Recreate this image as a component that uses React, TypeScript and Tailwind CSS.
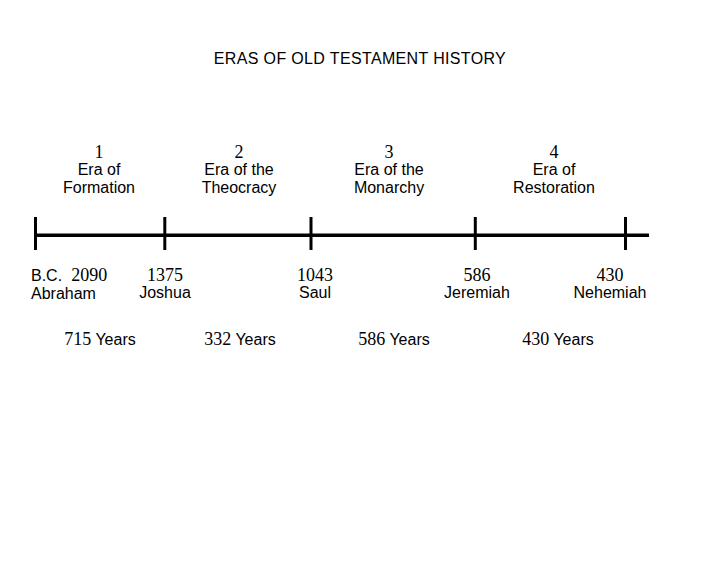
import React from "react";

const sans = "font-['Liberation_Sans',Arial,sans-serif]";
const serif = "font-['Liberation_Serif','Times_New_Roman',serif]";

function Era({ n, a, b, cls }: { n: string; a: string; b: string; cls: string }) {
  return (
    <div className={`w-[140px] text-center ${cls}`}>
      <div className={`${serif} text-[18px] leading-[17px]`}>{n}</div>
      <div className={`${sans} text-[16px] leading-[18px]`}>{a}</div>
      <div className={`${sans} text-[16px] leading-[18px]`}>{b}</div>
    </div>
  );
}

function DateCell({ y, name, cls }: { y: string; name: string; cls: string }) {
  return (
    <div className={`w-[100px] text-center ${cls}`}>
      <div className={`${serif} text-[18px] leading-[18px]`}>{y}</div>
      <div className={`${sans} text-[16px] leading-[18px]`}>{name}</div>
    </div>
  );
}

function Years({ n, cls }: { n: string; cls: string }) {
  return (
    <div className={`w-[100px] text-center whitespace-nowrap leading-[18px] ${cls}`}>
      <span className={`${serif} text-[18px]`}>{n}</span>
      <span className={`${sans} text-[16px]`}> Years</span>
    </div>
  );
}

export default function App() {
  const ticks = [35.5, 164.8, 311, 475.3, 625.5];
  return (
    <div className="w-[720px] h-[576px] bg-white text-black flex flex-col">
      <div className={`pt-[50px] text-center ${sans} text-[16px] leading-[18px] tracking-[0.35px]`}>
        ERAS OF OLD TESTAMENT HISTORY
      </div>
      <div className="mt-[75.5px] flex pl-[29px]">
        <Era n="1" a="Era of" b="Formation" cls="" />
        <Era n="2" a="Era of the" b="Theocracy" cls="" />
        <Era n="3" a="Era of the" b="Monarchy" cls="ml-[10px]" />
        <Era n="4" a="Era of" b="Restoration" cls="ml-[25px]" />
      </div>
      <svg className="mt-[13.5px] block" width="720" height="50" viewBox="0 210 720 50">
        <line x1="35.5" y1="235.3" x2="649" y2="235.3" stroke="#000" strokeWidth="3.6" />
        {ticks.map((x) => (
          <line key={x} x1={x} y1="217" x2={x} y2="250" stroke="#000" strokeWidth="3" />
        ))}
      </svg>
      <div className="mt-[6px] flex">
        <div className="ml-[31px] w-[84px] text-left whitespace-nowrap">
          <div className="leading-[18px]">
            <span className={`${sans} text-[16px]`}>B.C.</span>
            <span className={`${serif} text-[18px] ml-[9px]`}>2090</span>
          </div>
          <div className={`${sans} text-[16px] leading-[18px]`}>Abraham</div>
        </div>
        <DateCell y="1375" name="Joshua" cls="" />
        <DateCell y="1043" name="Saul" cls="ml-[50px]" />
        <DateCell y="586" name="Jeremiah" cls="ml-[62px]" />
        <DateCell y="430" name="Nehemiah" cls="ml-[33px]" />
      </div>
      <div className="mt-[27px] flex pl-[50px]">
        <Years n="715" cls="" />
        <Years n="332" cls="ml-[40px]" />
        <Years n="586" cls="ml-[54px]" />
        <Years n="430" cls="ml-[64px]" />
      </div>
    </div>
  );
}
